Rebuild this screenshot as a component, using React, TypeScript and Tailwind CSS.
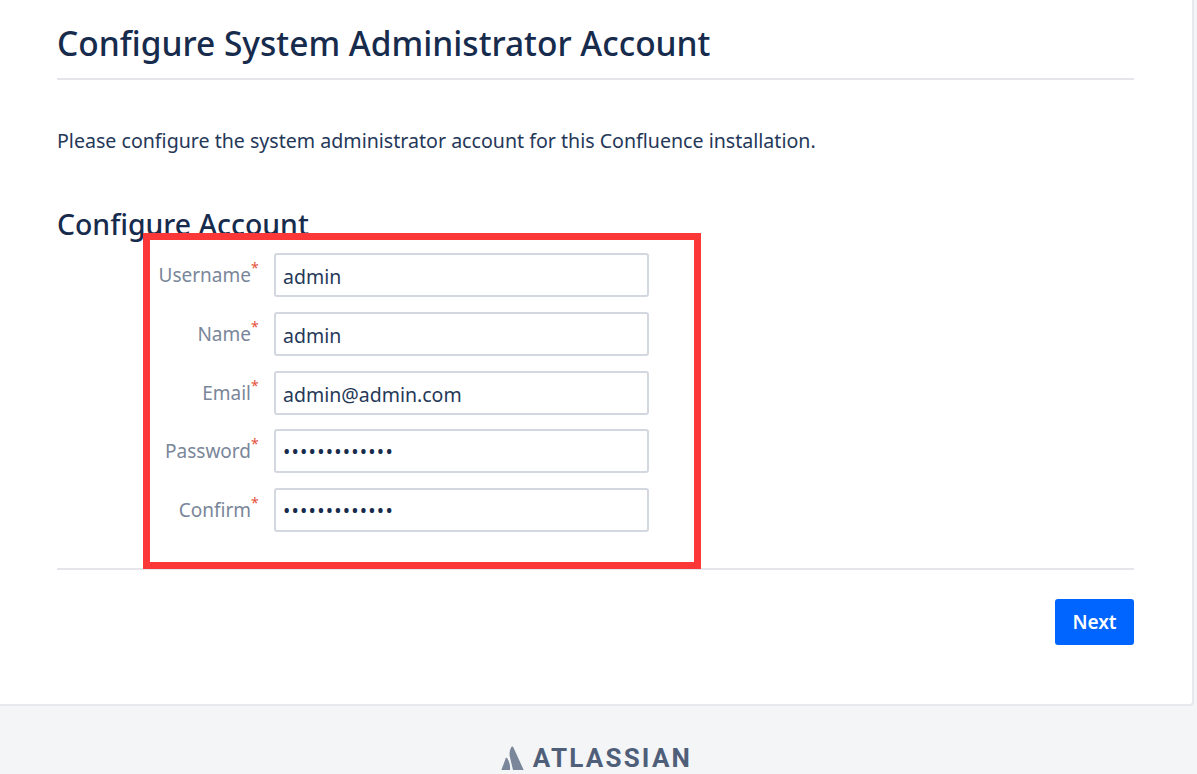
const FONT = "font-['Noto_Sans','Open_Sans',sans-serif]";

const fields = [
  { label: 'Username', value: 'admin', type: 'text' },
  { label: 'Name', value: 'admin', type: 'text' },
  { label: 'Email', value: 'admin@admin.com', type: 'text' },
  { label: 'Password', value: 'administrator', type: 'password' },
  { label: 'Confirm', value: 'administrator', type: 'password' },
];

function Field({ label, value, type }: { label: string; value: string; type: string }) {
  return (
    <div className="flex items-center h-[44px]">
      <label className="w-[118px] shrink-0 text-right text-[19px] leading-[24px] text-[#7a869a]">{label}</label>
      <span className="w-[12px] shrink-0 self-start mt-[8px] text-[14px] leading-[14px] text-[#e5533d]">*</span>
      <input
        readOnly
        type={type}
        value={value}
        className={
          type === 'password'
            ? 'ml-[11px] w-[375px] h-[44px] rounded-[3px] border-2 border-[#d3d7e0] bg-white px-[7px] pt-[1px] text-[19.500px] tracking-[1.200px] text-[#172b4d] outline-none'
            : 'ml-[11px] w-[375px] h-[44px] rounded-[3px] border-2 border-[#d3d7e0] bg-white px-[7px] pt-[3px] text-[19.500px] text-[#253858] outline-none'
        }
      />
    </div>
  );
}

function AtlassianMark() {
  return (
    <svg width="23" height="24" viewBox="0 0 23 24" fill="#7a869a">
      <path d="M10.200 1.200C8.300 5 8.100 8.800 9.300 12.500L12 24H22.700L12.300 1.200c-.5-.9-1.600-.9-2.100 0z" />
      <path d="M6.200 12.200c-.4-.6-1.100-.5-1.400.1L.3 24H9c.6-3.500-.5-8.300-2.800-11.800z" />
    </svg>
  );
}

export default function App() {
  return (
    <div className={`${FONT} relative h-[774px] overflow-hidden bg-[#f4f5f7]`}>
      <div className="mr-[3px] h-[706px] rounded-br-[4px] border-b-2 border-r-2 border-[#e6e8ee] bg-white pl-[57px] pr-[58px]">
        <h1 className="h-[80px] border-b-2 border-[#e4e6ea] pt-[19px] text-[33.500px] font-medium leading-[48px] text-[#172b4d]">
          Configure System Administrator Account
        </h1>
        <p className="mt-[47px] text-[19.600px] leading-[28px] text-[#253858]">
          Please configure the system administrator account for this Confluence installation.
        </p>
        <h2 className="mt-[51px] text-[28.400px] font-medium leading-[36px] text-[#172b4d]">Configure Account</h2>
        <div className="mt-[11px] flex flex-col gap-[14.750px] pl-[76px]">
          {fields.map((f) => (
            <Field key={f.label} {...f} />
          ))}
        </div>
        <div className="mt-[36px] flex justify-end border-t-2 border-[#e4e6ea] pt-[29px]">
          <button className="h-[46px] w-[79px] rounded-[3px] bg-[#0065ff] text-[19px] font-semibold text-white">Next</button>
        </div>
      </div>
      <div className="flex items-center justify-center gap-[9px] pr-[4px] pt-[40px]">
        <AtlassianMark />
        <span className="font-['Roboto',sans-serif] text-[26px] font-bold leading-[24px] tracking-[2.200px] text-[#505f79]">ATLASSIAN</span>
      </div>
      {/* red annotation drawn over the form */}
      <div className="absolute left-[143px] top-[233px] h-[336px] w-[558px] border-[7px] border-[#fb3737]" />
    </div>
  );
}
